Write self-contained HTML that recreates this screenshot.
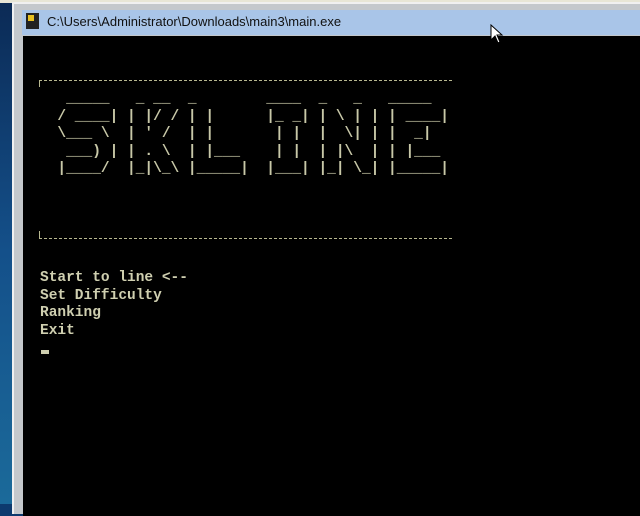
<!DOCTYPE html>
<html><head><meta charset="utf-8"><style>
body{margin:0;width:640px;height:504px;overflow:hidden;background:#0d3a6e;position:relative;font-family:"Liberation Sans",sans-serif}
.desk{position:absolute;left:0;top:0;width:13px;height:504px;background:linear-gradient(#0b2a55,#14508a 50%,#1b6a9a)}
.top{position:absolute;left:0;top:0;width:640px;height:3px;background:#e8e6d6}
.frame{position:absolute;left:12px;top:2px;width:640px;height:510px;background:#c4c8cc;border-left:2px solid #f0f0f0;border-top:2px solid #f0f0f0}
.title{position:absolute;left:22px;top:10px;width:630px;height:25px;background:#a9c5e8}
.title span{position:absolute;left:25px;top:4px;font-size:13px;color:#111}
.icon{position:absolute;left:4px;top:3px;width:13px;height:16px;background:#222}
.icon:after{content:"";position:absolute;left:2px;top:2px;width:6px;height:6px;background:#e8c020}
.con{position:absolute;left:23px;top:36px;width:620px;height:480px;background:#000}
pre{position:absolute;margin:0;font-family:"Liberation Mono",monospace;font-size:14.5px;line-height:17.6px;color:#cfcfb0;font-weight:bold}
.art{left:40px;top:91px;font-size:14.5px;color:#c8c8a8}
.hl{position:absolute;left:39px;width:413px;border-top:1px dashed #b8b890}
.vl{position:absolute;left:39px;width:0;height:7px;border-left:1px solid #b8b890}
.cur{position:absolute;left:41px;top:350px;width:8px;height:4px;background:#cfcfb0}
</style></head><body>
<div class="desk"></div><div class="top"></div>
<div class="frame"></div>
<div class="title"><div class="icon"></div><span>C:\Users\Administrator\Downloads\main3\main.exe</span></div>
<div class="con"></div>
<div class="hl" style="top:80px"></div><div class="vl" style="top:80px"></div>
<pre class="art">   _____   _ __  _        ____  _   _   _____
  / ____| | |/ / | |      |_ _| | \ | | | ____|
  \___ \  | ' /  | |       | |  |  \| | |  _|
   ___) | | . \  | |___    | |  | |\  | | |___
  |____/  |_|\_\ |_____|  |___| |_| \_| |_____|</pre>
<div class="vl" style="top:231px"></div><div class="hl" style="top:238px"></div>
<pre style="left:40px;top:270px">Start to line &lt;--
Set Difficulty
Ranking
Exit</pre>
<div class="cur"></div>
<svg style="position:absolute;left:490px;top:24px" width="14" height="22" viewBox="0 0 14 22"><path d="M1 1 L1 16 L5 12 L8 19 L10 18 L7 11 L12 11 Z" fill="#fff" stroke="#000" stroke-width="1"/></svg>
</body></html>
